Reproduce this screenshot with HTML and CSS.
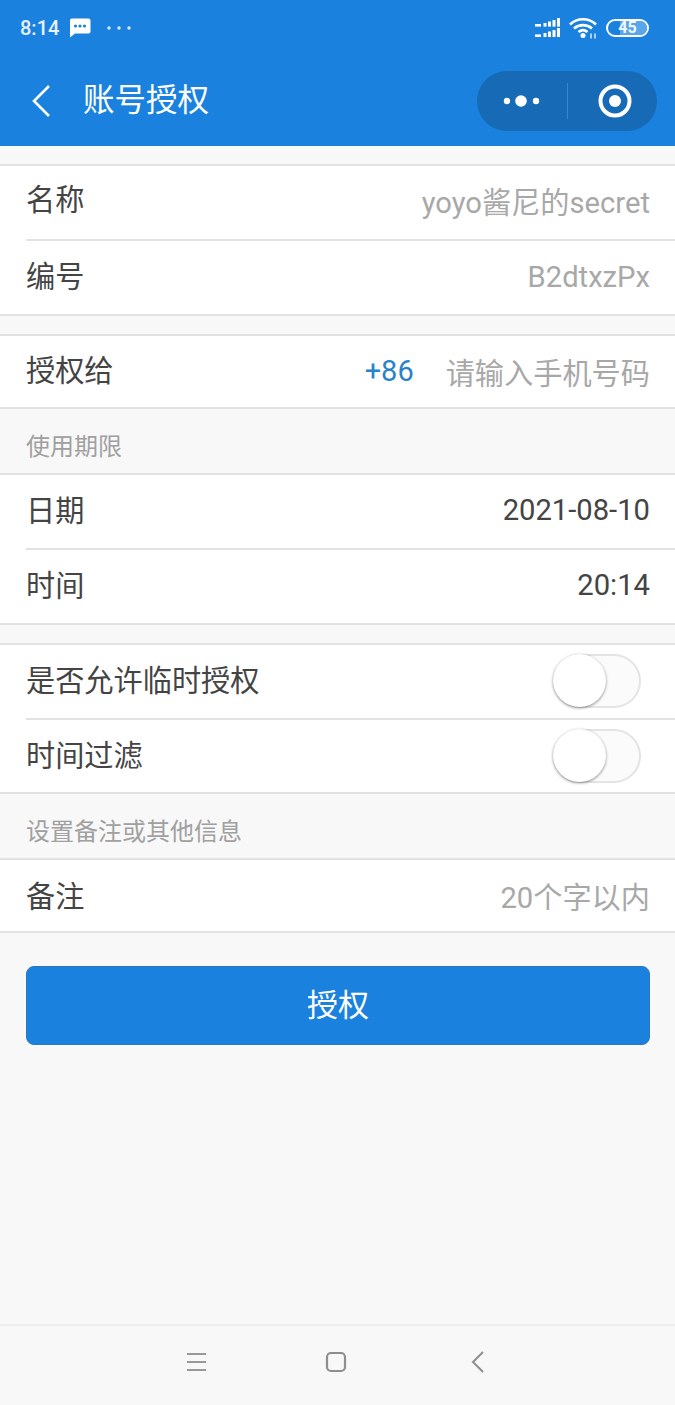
FILE: index.html
```html
<!DOCTYPE html>
<html>
<head>
    <title>账号授权</title>
    <link rel="stylesheet" href="styles.css">
</head>
<body>
    <div class="page">
        <div class="header">
            <div class="status-bar">
                <span class="clock">8:14</span>
                <svg class="msg-icon" width="22" height="20" viewBox="0 0 22 20">
                    <path d="M2.5 0.5h17a2 2 0 0 1 2 2v11a2 2 0 0 1-2 2H6l-5 4V2.5a2 2 0 0 1 1.5-2z" fill="#fff"/>
                    <circle cx="6.5" cy="8" r="1.6" fill="#1a82de"/>
                    <circle cx="11" cy="8" r="1.6" fill="#1a82de"/>
                    <circle cx="15.5" cy="8" r="1.6" fill="#1a82de"/>
                </svg>
                <svg class="more-icon" width="24" height="4" viewBox="0 0 24 4">
                    <circle cx="2" cy="2" r="1.7" fill="#dcebfa"/>
                    <circle cx="12" cy="2" r="1.7" fill="#dcebfa"/>
                    <circle cx="22" cy="2" r="1.7" fill="#dcebfa"/>
                </svg>
                <div class="status-right">
                    <svg width="26" height="20" viewBox="0 0 26 20">
                        <g fill="#fff">
                            <rect x="0" y="6" width="6" height="2.6"/><rect x="8.5" y="5" width="3" height="3.6"/><rect x="13" y="3.5" width="3" height="5.1"/><rect x="17.5" y="2" width="3" height="6.6"/><rect x="22" y="0" width="3" height="8.6"/>
                            <rect x="0" y="16.4" width="6" height="2.6"/><rect x="8.5" y="15" width="3" height="4"/><rect x="13" y="13.5" width="3" height="5.5"/><rect x="17.5" y="12" width="3" height="7"/><rect x="22" y="10" width="3" height="9"/>
                        </g>
                    </svg>
                    <svg class="wifi" width="29" height="22" viewBox="0 0 29 22">
                        <path d="M1 7.5C8 0.5 20 0.5 27 7.5M5 11.5c5-4.5 13-4.5 18 0M9.5 15c3-2.5 6-2.5 9 0" fill="none" stroke="#fff" stroke-width="2.6"/>
                        <circle cx="14" cy="18.5" r="2.5" fill="#fff"/>
                        <path d="M22 21.5v-5M26 21.5v-5" stroke="#dcebfa" stroke-width="1.5"/>
                    </svg>
                    <div class="battery"><span class="battery-fill"></span><span class="battery-num">45</span></div>
                </div>
            </div>
            <div class="nav-bar">
                <svg class="back-icon" width="20" height="34" viewBox="0 0 20 34">
                    <path d="M18 2L3 17l15 15" fill="none" stroke="#fff" stroke-width="2.6"/>
                </svg>
                <span class="nav-title">账号授权</span>
                <div class="capsule">
                    <div class="capsule-part">
                        <svg width="38" height="12" viewBox="0 0 38 12">
                            <circle cx="4" cy="6" r="3.2" fill="#fff"/>
                            <circle cx="18" cy="6" r="5.8" fill="#fff"/>
                            <circle cx="33" cy="6" r="3.2" fill="#fff"/>
                        </svg>
                    </div>
                    <div class="capsule-line"></div>
                    <div class="capsule-part capsule-right">
                        <svg width="34" height="34" viewBox="0 0 34 34">
                            <circle cx="17" cy="17" r="14.5" fill="none" stroke="#fff" stroke-width="4"/>
                            <circle cx="17" cy="17" r="6" fill="#fff"/>
                        </svg>
                    </div>
                </div>
            </div>
        </div>

        <div class="gap"></div>
        <div class="group">
            <div class="row row-high"><span class="row-label">名称</span><span class="row-value muted">yoyo酱尼的secret</span></div>
            <div class="row"><span class="row-label">编号</span><span class="row-value muted">B2dtxzPx</span></div>
        </div>

        <div class="gap"></div>
        <div class="group">
            <div class="row">
                <span class="row-label">授权给</span>
                <span class="phone-code">+86</span>
                <span class="row-value muted">请输入手机号码</span>
            </div>
        </div>

        <div class="section-title">使用期限</div>
        <div class="group">
            <div class="row"><span class="row-label">日期</span><span class="row-value">2021-08-10</span></div>
            <div class="row"><span class="row-label">时间</span><span class="row-value">20:14</span></div>
        </div>

        <div class="gap"></div>
        <div class="group">
            <div class="row"><span class="row-label">是否允许临时授权</span><div class="switch"><div class="knob"></div></div></div>
            <div class="row"><span class="row-label">时间过滤</span><div class="switch"><div class="knob"></div></div></div>
        </div>

        <div class="section-title">设置备注或其他信息</div>
        <div class="group">
            <div class="row"><span class="row-label row-label-low">备注</span><span class="row-value muted">20个字以内</span></div>
        </div>

        <div class="btn-wrap"><button class="main-btn">授权</button></div>

        <div class="bottom-nav">
            <svg width="20" height="20" viewBox="0 0 20 20">
                <path d="M1 2h19M1 10h19M1 18h19" stroke="#999" stroke-width="2"/>
            </svg>
            <svg width="22" height="22" viewBox="0 0 22 22">
                <rect x="2" y="2" width="18" height="18" rx="4" fill="none" stroke="#8e8e8e" stroke-width="2.2"/>
            </svg>
            <svg class="nav-back" width="14" height="22" viewBox="0 0 14 22">
                <path d="M12 1L2 11l10 10" fill="none" stroke="#8e8e8e" stroke-width="2"/>
            </svg>
        </div>
    </div>
</body>
</html>
```

FILE: styles.css
```css
* {
    box-sizing: border-box;
}

body {
    margin: 0;
    font-family: Roboto, "Noto Sans CJK SC", sans-serif;
    background-color: #f8f8f8;
}

.page {
    display: flex;
    flex-direction: column;
    height: 1405px;
    overflow: hidden;
}

.header {
    height: 146px;
    background-color: #1a82de;
    color: #fff;
}

.status-bar {
    display: flex;
    align-items: center;
    height: 55px;
    padding: 0 26px 0 20px;
}

.clock {
    font-size: 20px;
    font-weight: 500;
    color: #e6f1fc;
}

.msg-icon {
    margin-left: 10px;
}

.more-icon {
    margin-left: 16px;
}

.status-right {
    display: flex;
    align-items: center;
    gap: 8px;
    margin-left: auto;
}

.battery {
    position: relative;
    width: 43px;
    height: 18px;
    border: 2px solid #fff;
    border-radius: 9px;
    overflow: hidden;
    text-align: center;
}

.battery-fill {
    position: absolute;
    left: 30%;
    top: 0;
    bottom: 0;
    right: 0;
    background-color: #5aa6ea;
}

.battery-num {
    position: relative;
    display: block;
    font-size: 16px;
    line-height: 14px;
    font-weight: 700;
    color: #f2f8fe;
}

.nav-bar {
    display: flex;
    align-items: center;
    height: 91px;
    padding: 0 18px 0 31px;
}

.nav-title {
    margin-left: 32px;
    font-size: 31.5px;
    line-height: 91px;
}

.capsule {
    display: flex;
    align-items: center;
    width: 180px;
    height: 60px;
    margin-left: auto;
    background-color: #176ab5;
    border-radius: 30px;
}

.capsule-part {
    display: flex;
    align-items: center;
    justify-content: center;
    flex: 1;
    height: 100%;
}

.capsule-right svg {
    margin-left: 5px;
}

.capsule-line {
    width: 1px;
    height: 36px;
    background-color: #3e85c4;
}

.gap {
    height: 18px;
}

.group {
    background-color: #fff;
    border-top: 2px solid #e2e2e2;
    border-bottom: 2px solid #e2e2e2;
}

.row {
    display: flex;
    align-items: center;
    height: 73.3px;
    margin-left: 26px;
    padding-right: 25px;
}

.row + .row {
    height: 74.5px;
    border-top: 2px solid #e2e2e2;
}

.row:only-child {
    height: 71.5px;
}

/* primeira linha do grupo fica um pouco mais alta */
.row-high {
    padding-bottom: 4px;
}

.row-label {
    margin-bottom: 7px;
    font-size: 29.2px;
    color: #444;
}

.row-label-low {
    margin-bottom: 3px;
}

.row-value {
    margin-left: auto;
    margin-bottom: 2px;
    font-size: 29.2px;
    color: #444;
}

.muted {
    color: #a8a8a8;
}

.phone-code {
    margin-left: auto;
    margin-bottom: 2px;
    font-size: 29px;
    color: #2a82c9;
}

.phone-code + .row-value {
    margin-left: 32px;
    margin-bottom: 1px;
}

.section-title {
    display: flex;
    align-items: center;
    height: 63.5px;
    padding: 7px 0 0 26px;
    font-size: 24px;
    color: #a0a0a0;
}

.switch {
    position: relative;
    width: 88px;
    height: 54px;
    margin-left: auto;
    margin-right: 9px;
    margin-bottom: 1px;
    background-color: #fbfbfb;
    border: 2px solid #e4e4e4;
    border-radius: 27px;
}

.knob {
    position: absolute;
    left: -2px;
    top: -2px;
    width: 53px;
    height: 53px;
    background-color: #fff;
    border-radius: 50%;
    box-shadow: 0 1px 3px rgba(0, 0, 0, 0.45);
}

.btn-wrap {
    padding: 33px 25px 0 26px;
}

.main-btn {
    display: block;
    width: 100%;
    height: 79px;
    padding: 0 0 6px;
    font-family: inherit;
    font-size: 31px;
    color: #fff;
    background-color: #1a82de;
    border: 1px solid #2a78bf;
    border-radius: 8px;
}

.bottom-nav {
    display: flex;
    align-items: center;
    gap: 119px;
    height: 81px;
    margin-top: auto;
    padding: 0 0 8px 186px;
    border-top: 2px solid #eeeeee;
}

.nav-back {
    margin-left: 5px;
}
```
